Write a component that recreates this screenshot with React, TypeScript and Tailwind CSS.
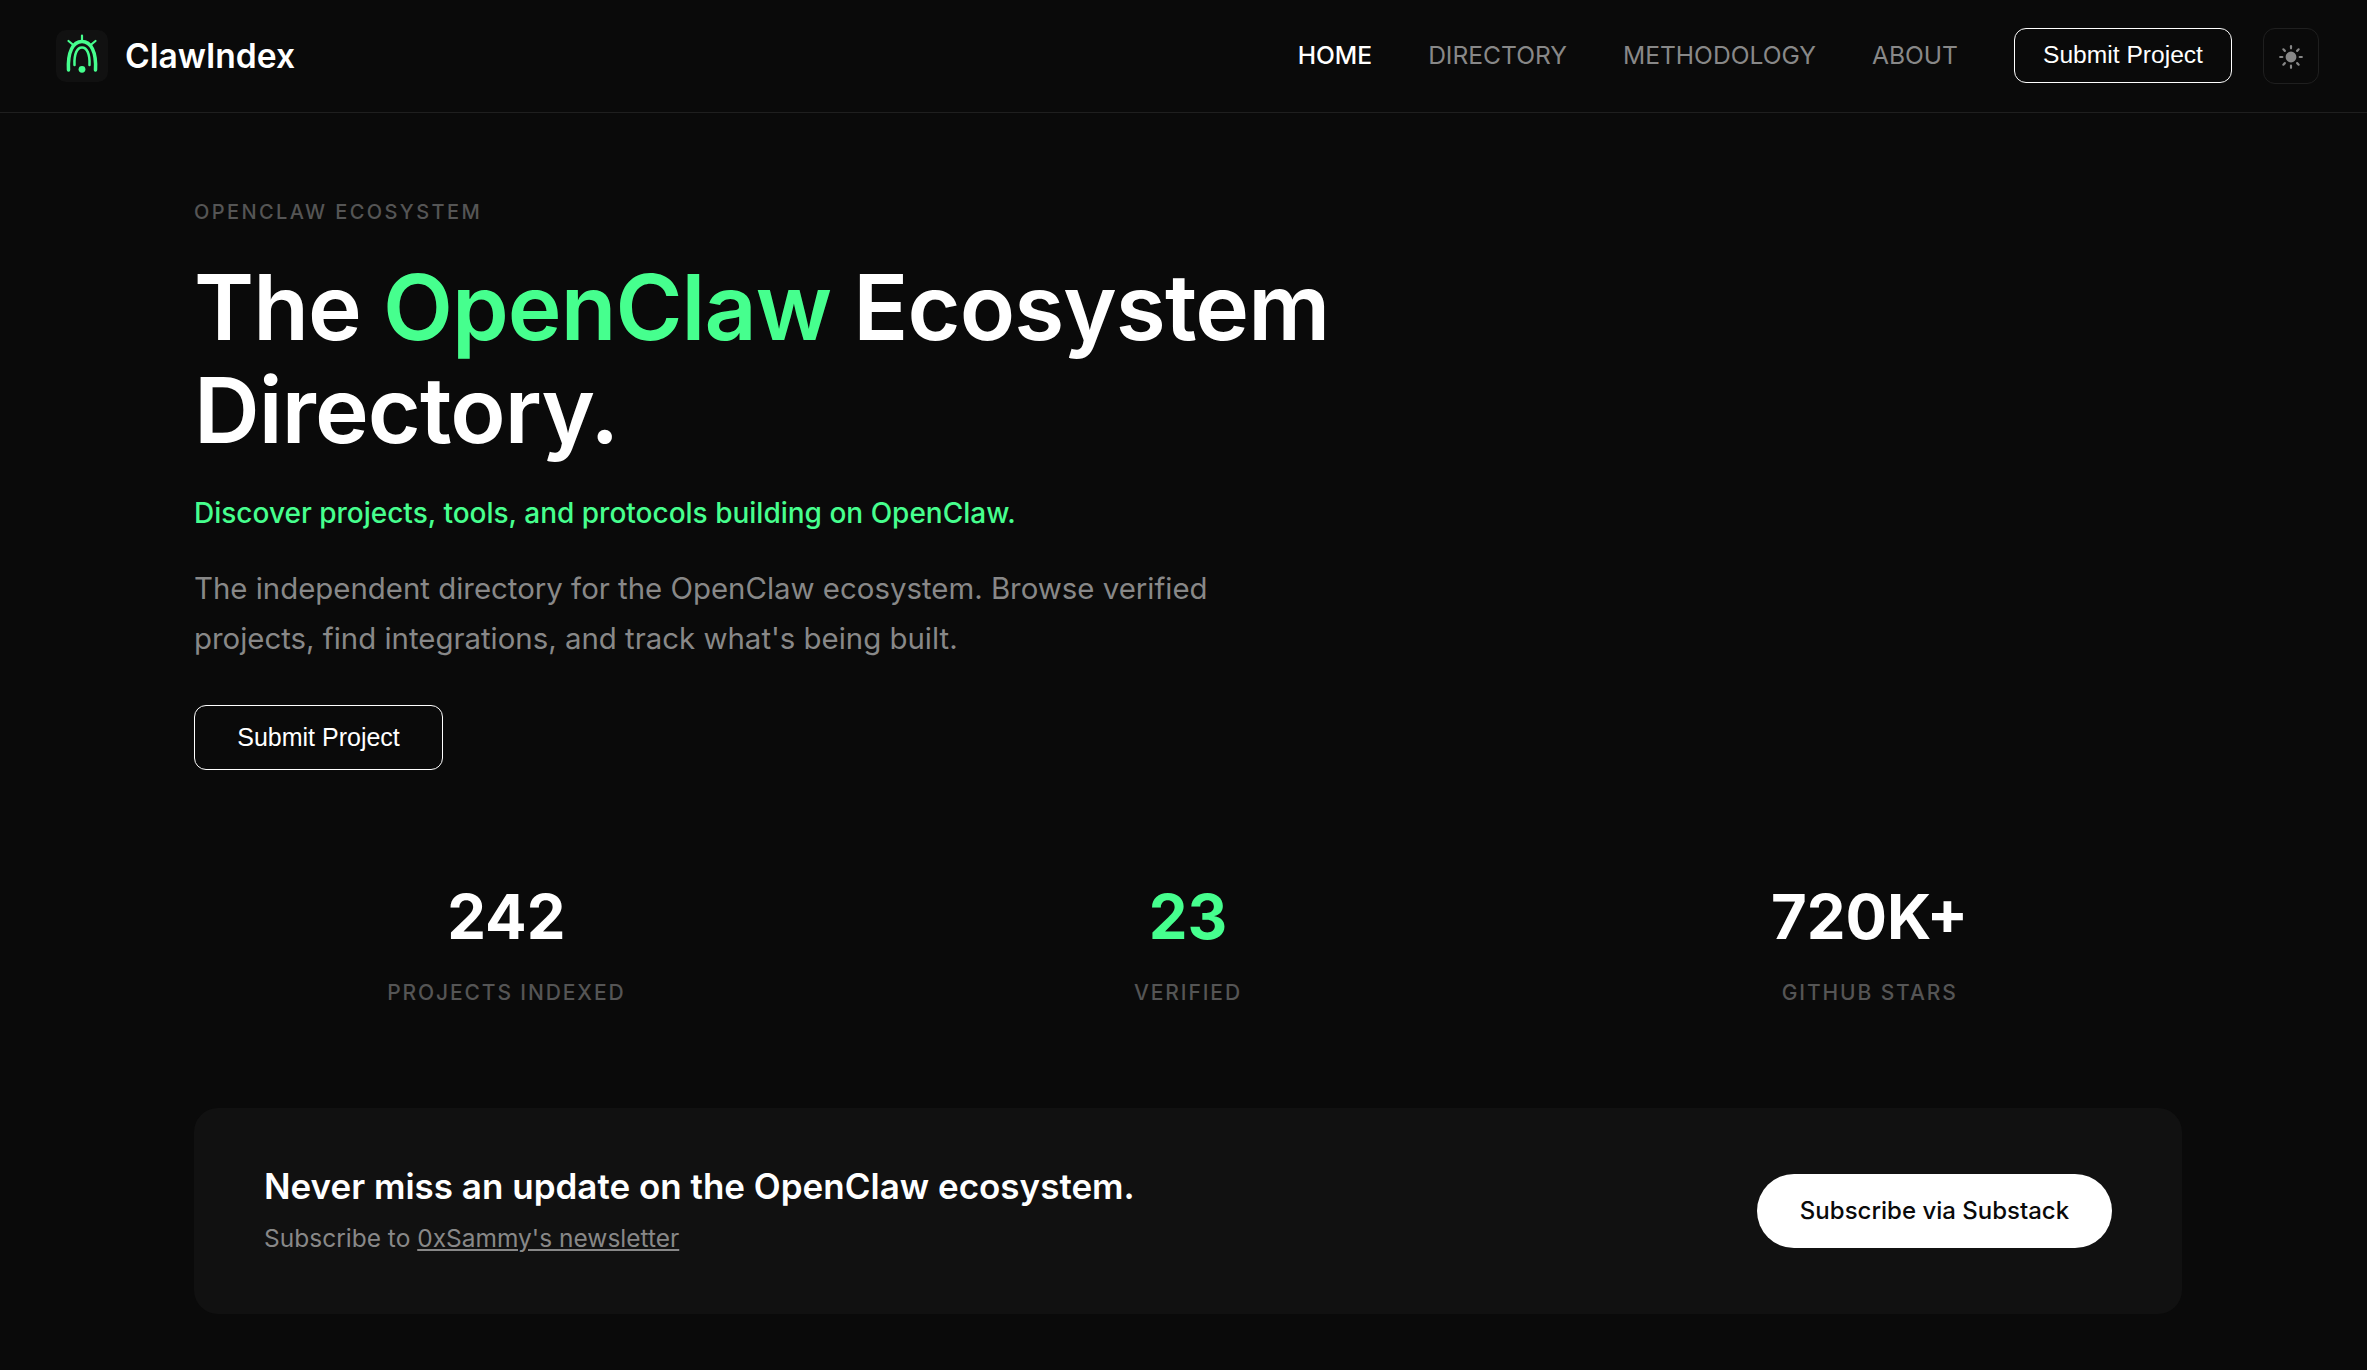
import { Sun } from "lucide-react";

const navLinks = ["HOME", "DIRECTORY", "METHODOLOGY", "ABOUT"];

const stats = [
  { value: "242", label: "PROJECTS INDEXED", green: false },
  { value: "23", label: "VERIFIED", green: true },
  { value: "720K+", label: "GITHUB STARS", green: false },
];

function ClawLogo() {
  return (
    <svg viewBox="0 0 52 52" className="w-[52px] h-[52px]" fill="none" stroke="#46ff8e" strokeLinecap="round">
      <path d="M12.5 40 C11.5 22 17 11.5 26 11.5 C35 11.5 40.5 22 39.5 40" strokeWidth="3.5" />
      <path d="M18.5 35 C18 24 21 17.5 26 17.5 C31 17.5 34 24 33.5 35" strokeWidth="2.5" />
      <path d="M26 5.5 V10 M12.5 11 L18 15.5 M39.5 11 L34 15.5" strokeWidth="2.2" />
      <circle cx="26" cy="39.3" r="3.4" fill="#46ff8e" stroke="none" />
    </svg>
  );
}

export default function App() {
  return (
    <div className="min-h-[1370px] bg-[#0a0a0a] text-white font-['Inter',sans-serif]">
      <header className="h-[113px] border-b border-[#1f1f1f] pl-[56px] pr-[48px] flex items-center justify-between">
        <div className="flex items-center gap-[17px]">
          <div className="w-[52px] h-[52px] rounded-[10px] bg-[#111111]">
            <ClawLogo />
          </div>
          <span className="text-[33.6px] font-semibold">ClawIndex</span>
        </div>
        <nav className="flex items-center gap-[56px]">
          {navLinks.map((link, i) => (
            <a
              key={link}
              className={
                i === 0
                  ? "pb-[2px] text-[24.6px] font-medium text-white"
                  : "pb-[2px] text-[24.6px] font-normal text-[#888888]"
              }
            >
              {link}
            </a>
          ))}
          <div className="flex gap-[31px]">
            <button className="w-[218px] h-[55px] rounded-[12px] border-[1.5px] border-white font-['Liberation_Sans',sans-serif] text-[24.6px] text-white">
              Submit Project
            </button>
            <button className="w-[56px] h-[56px] rounded-[12px] border border-[#1f1f1f] flex items-center justify-center">
              <Sun size={26} className="text-[#888888] fill-[#888888] translate-y-[1px]" />
            </button>
          </div>
        </nav>
      </header>

      <main className="w-[1988px] ml-[194px]">
        <p className="mt-[87px] text-[20px] leading-[24px] font-medium tracking-[0.12em] text-[#555555]">OPENCLAW ECOSYSTEM</p>
        <h1 className="mt-[32px] text-[91px] leading-[103px] font-semibold tracking-[-0.01em]">
          The <span className="text-[#46ff8e]">OpenClaw</span> Ecosystem
          <br />
          Directory.
        </h1>
        <p className="mt-[31px] text-[28px] leading-[40px] font-medium text-[#46ff8e]">
          Discover projects, tools, and protocols building on OpenClaw.
        </p>
        <p className="mt-[31px] text-[29.4px] leading-[50px] text-[#888888]">
          The independent directory for the OpenClaw ecosystem. Browse verified
          <br />
          projects, find integrations, and track what's being built.
        </p>
        <button className="mt-[41px] block w-[249px] h-[65px] rounded-[12px] border-[1.5px] border-white font-['Liberation_Sans',sans-serif] text-[25px] text-white">
          Submit Project
        </button>

        <div className="mt-[107px] grid grid-cols-3 gap-[57px]">
          {stats.map((stat) => (
            <div key={stat.label} className="flex flex-col items-center">
              <span className={`text-[61.6px] leading-[80px] font-bold ${stat.green ? "text-[#46ff8e]" : "text-white"}`}>
                {stat.value}
              </span>
              <span className="mt-[23px] text-[21px] leading-[26px] font-medium tracking-[0.09em] text-[#555555]">{stat.label}</span>
            </div>
          ))}
        </div>

        <div className="mt-[102px] h-[206px] rounded-[24px] bg-[#111111] px-[70px] flex items-center justify-between">
          <div className="pb-[2px]">
            <h2 className="text-[35px] leading-[44px] font-semibold">Never miss an update on the OpenClaw ecosystem.</h2>
            <p className="mt-[12px] text-[24.5px] leading-[36px] text-[#888888]">
              Subscribe to <a className="underline">0xSammy's newsletter</a>
            </p>
          </div>
          <button className="w-[355px] h-[74px] rounded-full bg-white text-[#0a0a0a] text-[24px] font-medium">
            Subscribe via Substack
          </button>
        </div>
      </main>
    </div>
  );
}
